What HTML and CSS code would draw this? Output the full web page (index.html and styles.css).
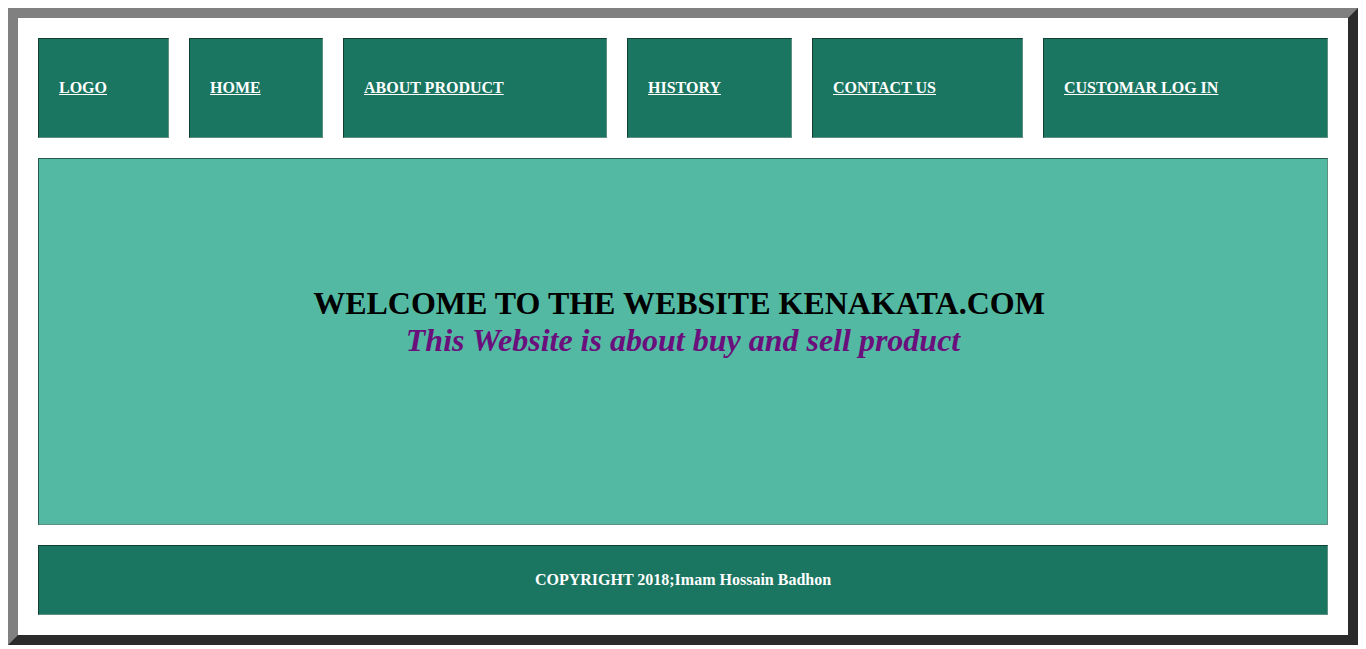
FILE: index.html
```html
<!DOCTYPE html>
<html>
<head>
<meta charset="utf-8">
<link rel="stylesheet" href="styles.css">
</head>
<body>
<div class="frame">
  <nav class="nav">
    <div class="nav-item"><a href="#">LOGO</a></div>
    <div class="nav-item"><a href="#">HOME</a></div>
    <div class="nav-item"><a href="#">ABOUT PRODUCT</a></div>
    <div class="nav-item"><a href="#">HISTORY</a></div>
    <div class="nav-item"><a href="#">CONTACT US</a></div>
    <div class="nav-item"><a href="#">CUSTOMAR LOG IN</a></div>
  </nav>
  <section class="hero">
    <h1 class="title">WELCOME TO THE WEBSITE KENAKATA.COM</h1>
    <h2 class="subtitle">This Website is about buy and sell product</h2>
  </section>
  <footer class="footer">COPYRIGHT 2018;Imam Hossain Badhon</footer>
</div>
</body>
</html>
```
FILE: styles.css
```css
html, body {
  margin: 0;
  padding: 0;
}
body {
  padding: 8px;
  font-family: "Liberation Serif", "Times New Roman", serif;
  background: #fff;
}
.frame {
  box-sizing: border-box;
  height: 637px;
  border: 10px solid;
  border-color: #808080 #2b2b2b #2b2b2b #808080;
  padding: 20px;
  display: flex;
  flex-direction: column;
  gap: 20px;
  background: #fff;
}
.nav {
  display: grid;
  grid-template-columns: 131px 134px 264px 165px 211px 285px;
  gap: 20px;
  height: 100px;
}
.nav-item {
  background: #1a7561;
  border: 1px solid;
  border-color: #123f33 #5e8f82 #5e8f82 #123f33;
  display: flex;
  align-items: center;
  padding: 0 20px;
}
.nav-item a {
  color: #ffffff;
  font-weight: bold;
  font-size: 16px;
  text-decoration: underline;
}
.hero {
  height: 367px;
  flex: none;
  box-sizing: border-box;
  background: #53b9a3;
  border: 1px solid;
  border-color: #2a5a4e #5e8f82 #5e8f82 #2a5a4e;
  display: flex;
  flex-direction: column;
  align-items: center;
  padding-top: 126px;
  text-align: center;
}
.title {
  margin: 0;
  padding-right: 8px;
  font-size: 32px;
  line-height: 37px;
  font-weight: bold;
  color: #000;
}
.subtitle {
  margin: 0;
  font-size: 32px;
  line-height: 36px;
  font-style: italic;
  font-weight: bold;
  color: #6a0f7c;
}
.footer {
  height: 70px;
  flex: none;
  box-sizing: border-box;
  background: #1a7561;
  border: 1px solid;
  border-color: #123f33 #5e8f82 #5e8f82 #123f33;
  display: flex;
  align-items: center;
  justify-content: center;
  color: #fff;
  font-weight: bold;
  font-size: 16px;
}
```
